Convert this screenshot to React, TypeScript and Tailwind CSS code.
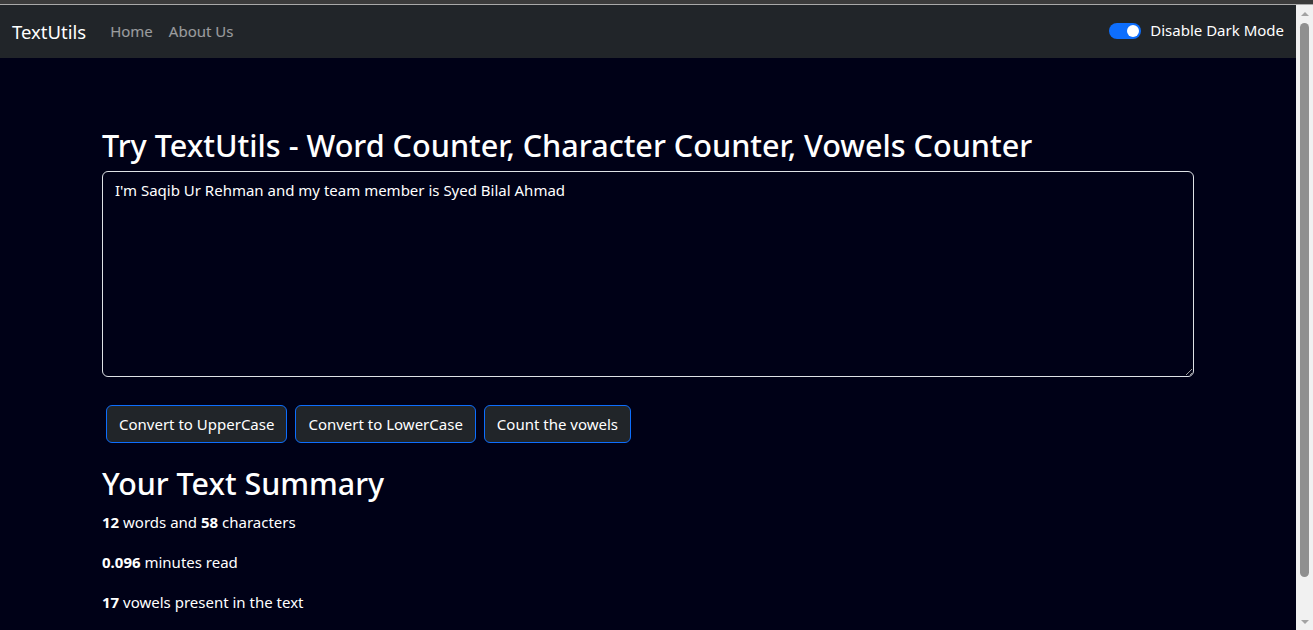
import { useState } from "react";

function Navbar() {
  return (
    <nav className="flex items-center justify-between h-[53px] px-3 bg-[#212529]">
      <div className="flex items-center">
        <span className="text-[18.5px] text-white mr-4 leading-[30px]">TextUtils</span>
        <ul className="flex list-none">
          <li className="px-2 text-[15px] text-white/55">Home</li>
          <li className="px-2 text-[15px] text-white/55">About Us</li>
        </ul>
      </div>
      <div className="flex items-center -mt-[2px]">
        <div className="w-8 h-4 rounded-full bg-[#0d6efd] flex items-center justify-end pr-[2px] mt-[1px]">
          <div className="w-3 h-3 rounded-full bg-white" />
        </div>
        <label className="ml-[9px] text-[15px] text-white">Disable Dark Mode</label>
      </div>
    </nav>
  );
}

function Scrollbar() {
  return (
    <div className="w-[17px] bg-[#f1f1f1] flex flex-col items-center">
      <div className="h-[17px] flex items-center justify-center">
        <div className="w-0 h-0 border-l-4 border-r-4 border-b-4 border-l-transparent border-r-transparent border-b-[#a3a3a3]" />
      </div>
      <div className="flex-1 w-full flex justify-center pt-[1px] pb-[36px]">
        <div className="w-[9px] h-full rounded-full bg-[#8f8f8f] ml-[-1px]" />
      </div>
      <div className="h-[17px] flex items-center justify-center">
        <div className="w-0 h-0 border-l-4 border-r-4 border-t-4 border-l-transparent border-r-transparent border-t-[#a3a3a3]" />
      </div>
    </div>
  );
}

export default function App() {
  const [text] = useState("I'm Saqib Ur Rehman and my team member is Syed Bilal Ahmad");
  return (
    <div className="h-[630px] flex flex-col bg-[#000117] overflow-hidden font-['Noto_Sans',sans-serif]">
      <div className="h-[5px] bg-[#3b3b3b] border-b border-[#a9a9a9]" />
      <div className="flex flex-1 min-h-0">
        <div className="flex-1 overflow-hidden">
          <Navbar />
          <main className="px-[102px] pt-[68px]">
            <h1 className="text-[30.6px] font-medium leading-[38px] text-white mb-[7px]">
              Try TextUtils - Word Counter, Character Counter, Vowels Counter
            </h1>
            <textarea
              className="block w-full h-[206px] rounded-[6px] border border-[#dee2e6] bg-[#000117] text-white text-[15px] leading-6 px-3 py-[6px] outline-none"
              defaultValue={text}
            />
            <div className="flex gap-2 mt-[28px] ml-1">
              <button className="h-[38px] px-3 rounded-[6px] border border-[#0d6efd] bg-[#212529] text-white text-[15px]">
                Convert to UpperCase
              </button>
              <button className="h-[38px] px-3 rounded-[6px] border border-[#0d6efd] bg-[#212529] text-white text-[15px]">
                Convert to LowerCase
              </button>
              <button className="h-[38px] px-3 rounded-[6px] border border-[#0d6efd] bg-[#212529] text-white text-[15px]">
                Count the vowels
              </button>
            </div>
            <h2 className="text-[30.4px] font-medium leading-[38px] text-white mt-[22px] mb-[7px]">Your Text Summary</h2>
            <p className="text-[15px] leading-6 text-white mb-4">
              <b>12</b> words and <b>58</b> characters
            </p>
            <p className="text-[15px] leading-6 text-white mb-4">
              <b>0.096</b> minutes read
            </p>
            <p className="text-[15px] leading-6 text-white mb-4">
              <b>17</b> vowels present in the text
            </p>
          </main>
        </div>
        <Scrollbar />
      </div>
    </div>
  );
}
